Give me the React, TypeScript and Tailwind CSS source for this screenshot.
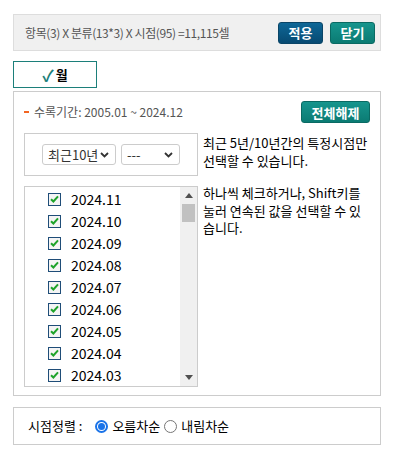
const periods = [
  '2024.11', '2024.10', '2024.09', '2024.08', '2024.07',
  '2024.06', '2024.05', '2024.04', '2024.03',
];

function CheckBox() {
  return (
    <span className="flex h-[13px] w-[13px] items-center justify-center border border-[#1f4d78] bg-[#f4f4f4]">
      <svg width="9" height="8" viewBox="0 0 9 8">
        <path d="M1 4.2 L3.4 6.5 L8 1.3" fill="none" stroke="#1ea32a" strokeWidth="2" />
      </svg>
    </span>
  );
}

function Radio({ checked }: { checked?: boolean }) {
  if (checked) {
    return (
      <span className="flex h-[13px] w-[13px] items-center justify-center rounded-full border-2 border-[#1a73e8] bg-white">
        <span className="h-[7px] w-[7px] rounded-full bg-[#1a73e8]" />
      </span>
    );
  }
  return <span className="h-[13px] w-[13px] rounded-full border border-[#767676] bg-white" />;
}

function Chevron() {
  return (
    <svg width="9" height="6" viewBox="0 0 9 6">
      <path d="M1 1 L4.5 4.5 L8 1" fill="none" stroke="#333" strokeWidth="1.8" />
    </svg>
  );
}

export default function App() {
  return (
    <div className="h-[450px] w-[394px] bg-white px-[13px] pt-[14px] font-['Noto_Sans_CJK_KR','Noto_Sans',sans-serif]">
      {/* summary bar */}
      <div className="flex h-[37px] items-center justify-between border border-[#ddd] bg-[#f0f0f0] pl-[11px] pr-[5px]">
        <span className="text-[12px] tracking-[-0.4px] text-[#555]">항목(3) X 분류(13*3) X 시점(95) =11,115셀</span>
        <div className="flex gap-[7px]">
          <button className="h-[22px] w-[45px] rounded-[3px] border border-[#0a4567] bg-gradient-to-b from-[#0e6797] to-[#074a72] text-[13px] font-bold leading-none text-white">
            적용
          </button>
          <button className="h-[22px] w-[45px] rounded-[3px] border border-[#0a6a63] bg-gradient-to-b from-[#16958d] to-[#0b7b73] text-[13px] font-bold leading-none text-white">
            닫기
          </button>
        </div>
      </div>

      {/* tab */}
      <div className="mt-[10px] flex h-[27px] w-[84px] items-center justify-center gap-[2px] border border-[#1c7f7a] bg-white">
        <span className="text-[16px] font-bold leading-none text-[#1c7f7a]">✓</span>
        <span className="text-[13px] font-bold leading-none text-black">월</span>
      </div>

      {/* main panel */}
      <div className="mt-[3px] h-[305px] border border-[#ccc] px-[10px] pt-[9px]">
        <div className="flex items-center justify-between">
          <div className="flex items-center gap-[5px] text-[12px] text-[#555]">
            <span className="h-[2px] w-[5px] bg-[#f26522]" />
            <span>수록기간: 2005.01 ~ 2024.12</span>
          </div>
          <button className="h-[22px] w-[69px] rounded-[3px] border border-[#0a6a63] bg-gradient-to-b from-[#16958d] to-[#0b7b73] text-[13px] font-bold leading-none text-white">
            전체해제
          </button>
        </div>

        <div className="mt-[10px] flex gap-[5px]">
          <div className="w-[174px] shrink-0">
            <div className="flex h-[43px] items-center justify-center gap-[5px] border border-[#ccc]">
              <div className="flex h-[21px] w-[74px] items-center justify-between rounded-[3px] border border-[#ccc] pl-[5px] pr-[6px]">
                <span className="text-[13px] leading-none text-[#333]">최근10년</span>
                <Chevron />
              </div>
              <div className="flex h-[21px] w-[59px] items-center justify-between rounded-[3px] border border-[#ccc] pl-[5px] pr-[6px]">
                <span className="text-[13px] leading-none text-[#333]">---</span>
                <Chevron />
              </div>
            </div>

            <div className="mt-[10px] flex h-[201px] border border-[#ccc]">
              <ul className="flex-1 overflow-hidden pt-[1px]">
                {periods.map((p) => (
                  <li key={p} className="flex h-[22px] items-center pl-[23px]">
                    <CheckBox />
                    <span className="ml-[10px] text-[14px] leading-none text-black">{p}</span>
                  </li>
                ))}
              </ul>
              <div className="flex w-[17px] flex-col items-center bg-[#f0f0f0]">
                <svg className="mt-[6px]" width="8" height="5" viewBox="0 0 8 5">
                  <path d="M0 5 L4 0 L8 5 Z" fill="#505050" />
                </svg>
                <div className="mt-[6px] h-[18px] w-[13px] bg-[#c1c1c1]" />
                <div className="flex-1" />
                <svg className="mb-[6px]" width="8" height="5" viewBox="0 0 8 5">
                  <path d="M0 0 L8 0 L4 5 Z" fill="#505050" />
                </svg>
              </div>
            </div>
          </div>

          <div className="flex-1 pt-[1px] text-[13px] leading-[17.5px] text-black">
            <p>최근 5년/10년간의 특정시점만 선택할 수 있습니다.</p>
            <p className="mt-[15px]">하나씩 체크하거나, Shift키를 눌러 연속된 값을 선택할 수 있습니다.</p>
          </div>
        </div>
      </div>

      {/* sort order */}
      <div className="mt-[11px] flex h-[38px] items-center border border-[#ccc] pl-[14px] text-[13px] text-black">
        <span>시점정렬 :</span>
        <label className="ml-[13px] flex items-center gap-[4px]">
          <Radio checked />
          <span>오름차순</span>
        </label>
        <label className="ml-[4px] flex items-center gap-[4px]">
          <Radio />
          <span>내림차순</span>
        </label>
      </div>
    </div>
  );
}
